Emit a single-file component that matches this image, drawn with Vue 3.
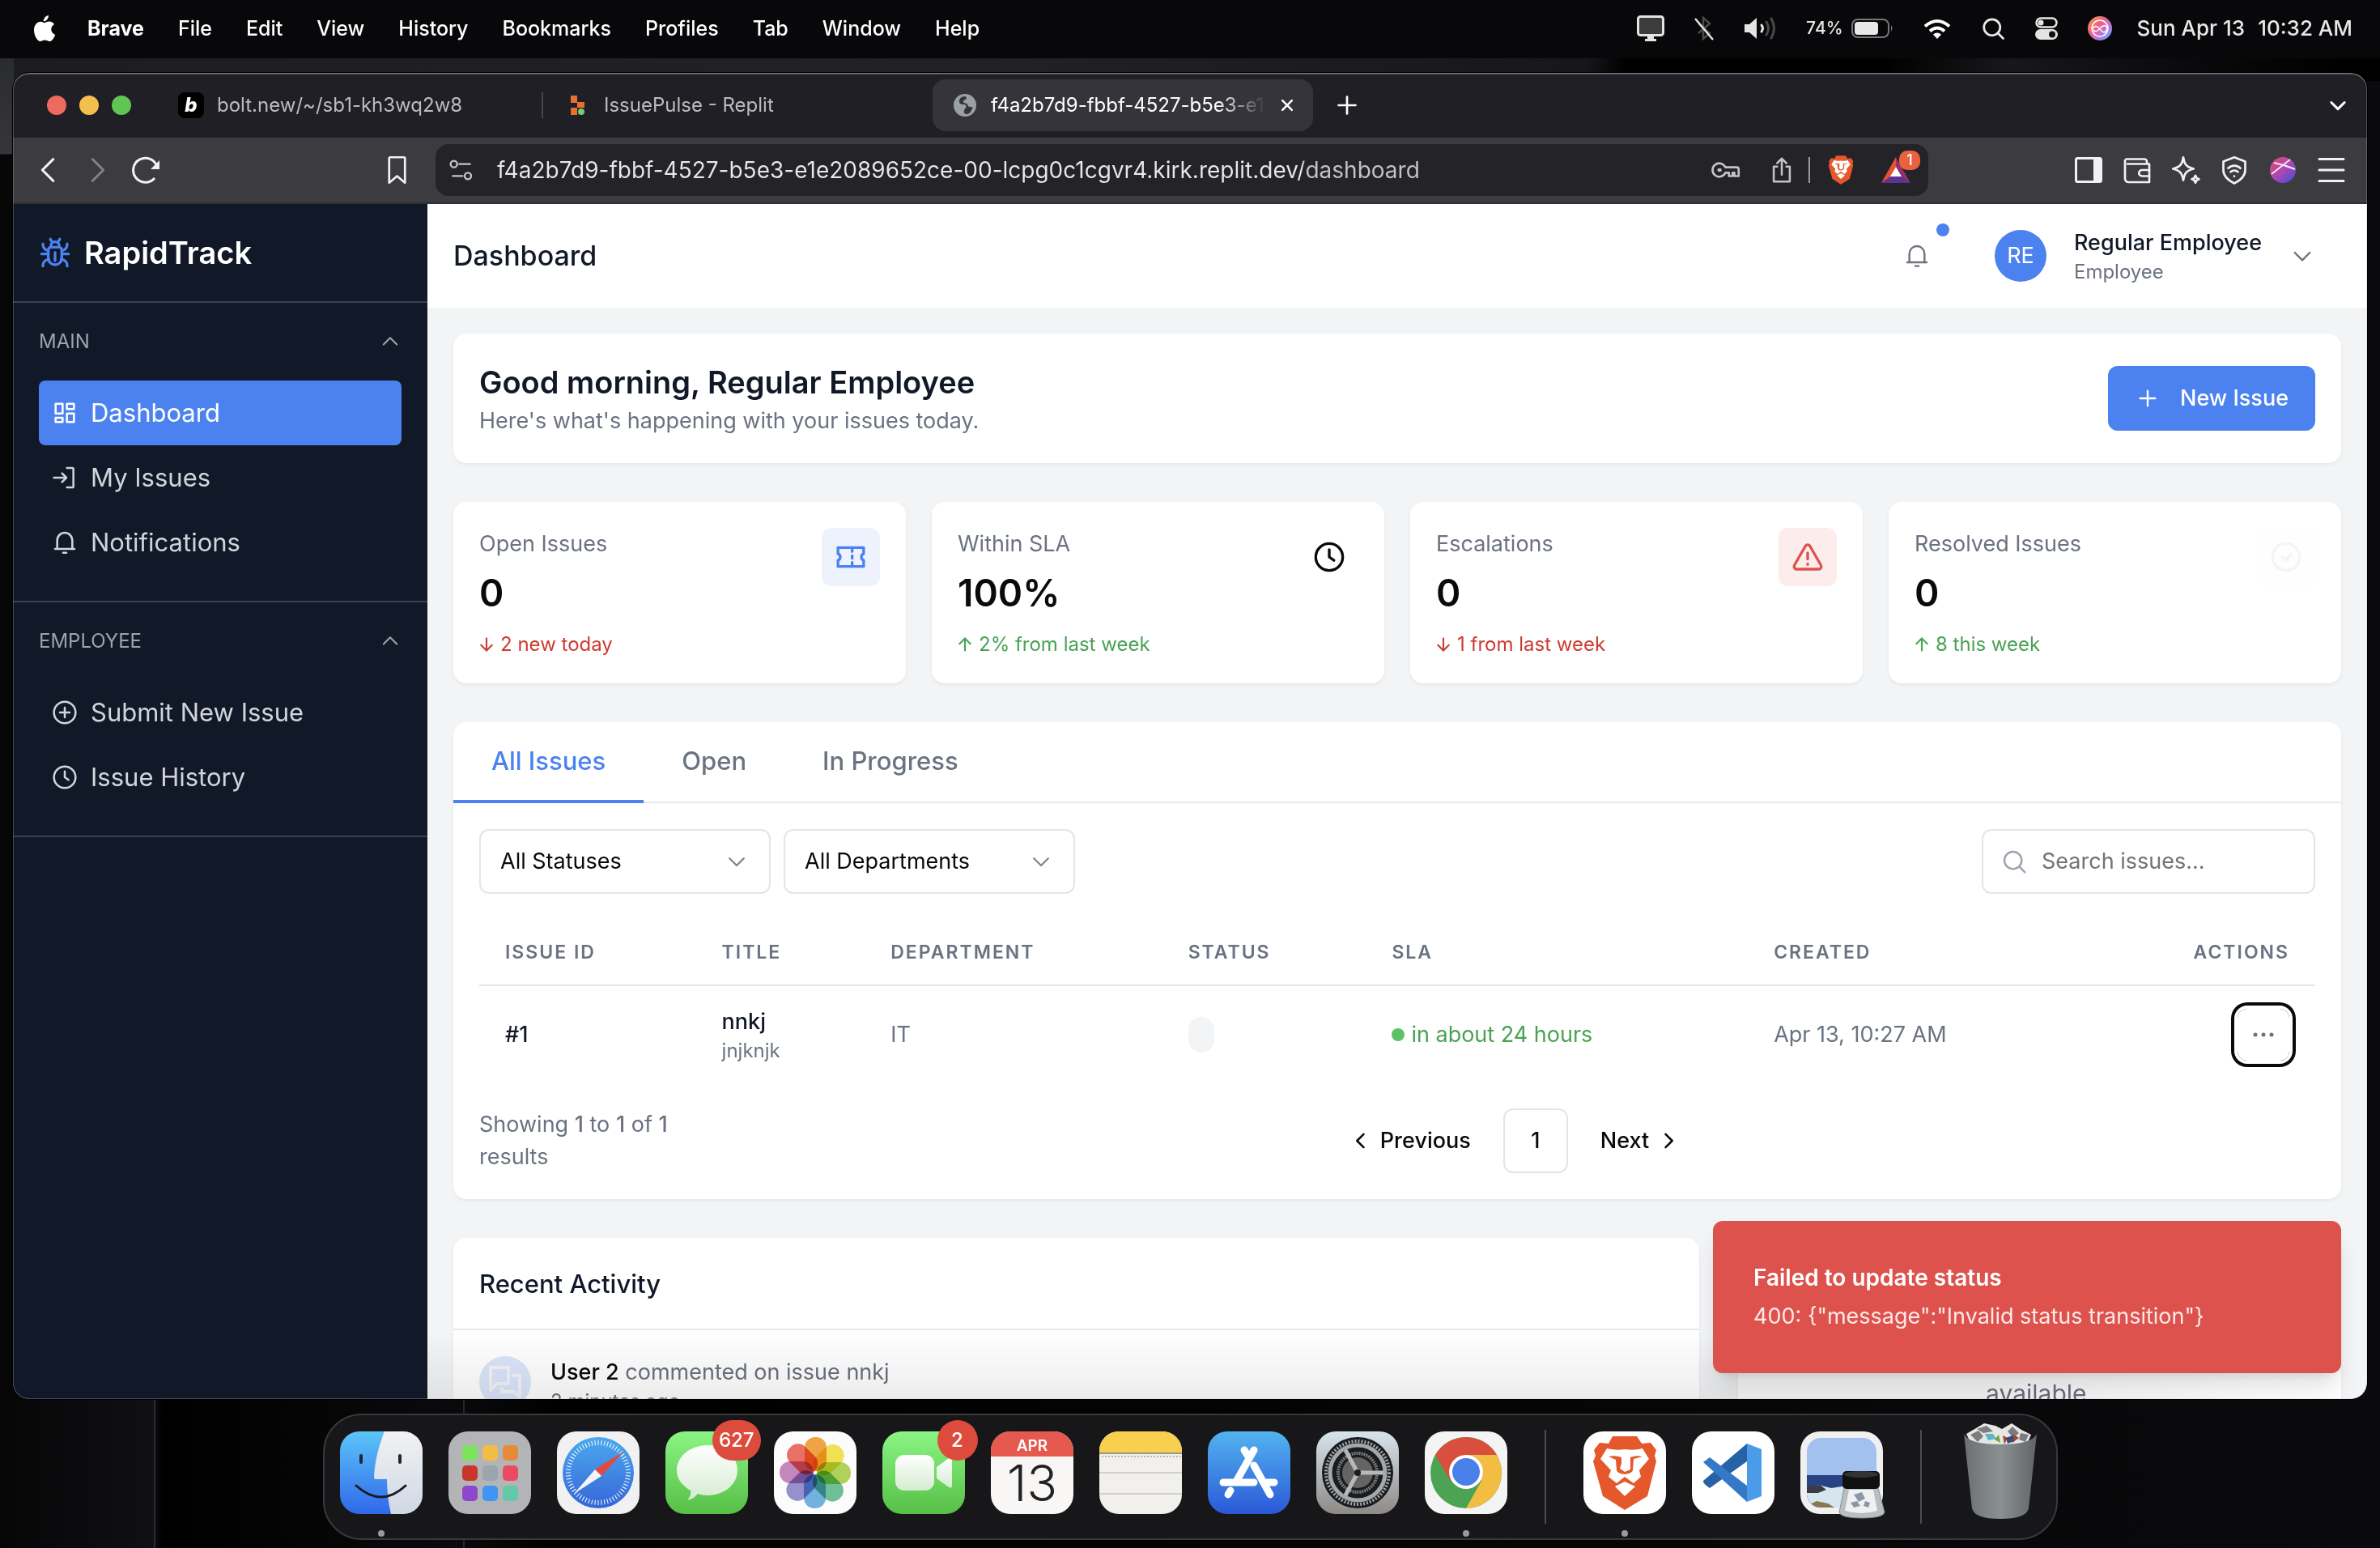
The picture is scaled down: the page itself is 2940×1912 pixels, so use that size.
<script setup>
import { h, ref } from 'vue'

const shapes = {
  bug: ['M7 10a2 2 0 0 1 2-2h6a2 2 0 0 1 2 2v6a5 5 0 0 1-10 0z', 'M12 12v6', 'M9 8V6.500a3 2.500 0 0 1 6 0V8', 'M8.500 2l1.500 2.500M15.500 2L14 4.500', 'M2 13h5M17 13h5', 'M3 5.500C3 8.500 4 10 7 10.500M21 5.500c0 3-1 4.500-4 5', 'M3 22c0-3 1-4.500 4.500-5M21 22c0-3-1-4.500-4.500-5'],
  board: ['M3.500 3.500h6.500v9H3.500z', 'M14 3.500h6.500v5H14z', 'M3.500 16.500h6.500v4H3.500z', 'M14 12.500h6.500v8H14z'],
  enter: ['M2 12h11', 'M9.500 8l4 4-4 4', 'M14 3h5a1 1 0 0 1 1 1v16a1 1 0 0 1-1 1h-5'],
  bell: ['M5 18v-8a7 7 0 0 1 14 0v8', 'M3 18h18', 'M10.500 21.500h3'],
  plusCircle: ['M12 2a10 10 0 1 0 0 20 10 10 0 0 0 0-20z', 'M12 7.500v9M7.500 12h9'],
  clock: ['M12 2a10 10 0 1 0 0 20 10 10 0 0 0 0-20z', 'M12 6.500V12l3.500 2.500'],
  up: ['M5 15l7-7 7 7'],
  down: ['M5 9l7 7 7-7'],
  left: ['M15 5l-7 7 7 7'],
  right: ['M9 5l7 7-7 7'],
  plus: ['M12 5v14M5 12h14'],
  ticket: ['M2.500 5h19v4.500a2.700 2.700 0 0 0 0 5V19h-19v-4.500a2.700 2.700 0 0 0 0-5z', 'M13 5v3M13 11v2M13 16v3'],
  warning: ['M10.300 3.900L2.200 18a2 2 0 0 0 1.700 3h16.200a2 2 0 0 0 1.700-3L13.700 3.900a2 2 0 0 0-3.400 0z', 'M12 9v4.500M12 17v.500'],
  check: ['M12 2a10 10 0 1 0 0 20 10 10 0 0 0 0-20z', 'M9 12l2.500 2.500L15.500 10'],
  trendDown: ['M12 2v20', 'M3 13l9 9 9-9'],
  trendUp: ['M12 22V2', 'M3 11l9-9 9 9'],
  search: ['M11 3a8 8 0 1 0 0 16 8 8 0 0 0 0-16z', 'M17 17l5 5'],
  chat: ['M3 3h11v10H7l-4 4z', 'M17 8h4v13l-4-3h-7v-2'],
  cross: ['M5 5l14 14M19 5L5 19'],
  menu: ['M2 3h20M2 12h20M2 21h20'],
  bookmark: ['M4.500 2.500a1 1 0 0 1 1-1h11a1 1 0 0 1 1 1v20L11 17l-6.500 5.500z'],
  share: ['M8 9H5v13h14V9h-3', 'M12 16V2M8 6l4-4 4 4'],
  tune: ['M2 6.500a3 3 0 1 0 6 0 3 3 0 0 0-6 0zM10 6.500h10', 'M15 17.500a3 3 0 1 0 6 0 3 3 0 0 0-6 0zM4 17.500h9'],
  key: ['M11.500 9.700H21a1.500 1.500 0 0 1 1.500 1.500V17H19v-2.700h-1.500V17h-3v-2.700h-3a5.500 5.500 0 1 1 0-4.600z', 'M6 11.500h1.500v1H6z'],
  wallet: ['M3 3h15a2 2 0 0 1 2 2v2M2 4v15a3 3 0 0 0 3 3h17V7H4', 'M22 12h-6a2.500 2.500 0 0 0 0 5h6'],
  spark: ['M10 1.500c1 6 2.500 8 8.500 9.500-6 1.500-7.500 3.500-8.500 9.500-1-6-2.500-8-8.500-9.500 6-1.500 7.500-3.500 8.500-9.500z', 'M20 16.500c.400 2 1 2.600 3 3-2 .400-2.600 1-3 3-.400-2-1-2.600-3-3 2-.400 2.600-1 3-3z'],
  vpn: ['M12 1.500l9 3.500v7c0 5-4 8.500-9 11-5-2.500-9-6-9-11V5z', 'M7 10.500a7 7 0 0 1 10 0M9 13.500a4.500 4.500 0 0 1 6 0M12 17v.200'],
}

const Glyph = (props) =>
  h('svg', {
    viewBox: '0 0 24 24', width: props.size, height: props.size, fill: 'none', stroke: 'currentColor',
    'stroke-width': props.weight ?? 2, 'stroke-linecap': 'round', 'stroke-linejoin': 'round', 'aria-hidden': 'true',
  }, shapes[props.name].map((d) => h('path', { d })))
Glyph.props = ['name', 'size', 'weight']

const menus = ['File', 'Edit', 'View', 'History', 'Bookmarks', 'Profiles', 'Tab', 'Window', 'Help']
const sections = [
  { title: 'MAIN', items: [
    { label: 'Dashboard', icon: 'board', active: true },
    { label: 'My Issues', icon: 'enter' },
    { label: 'Notifications', icon: 'bell' },
  ] },
  { title: 'EMPLOYEE', items: [
    { label: 'Submit New Issue', icon: 'plusCircle' },
    { label: 'Issue History', icon: 'clock' },
  ] },
]
const stats = [
  { label: 'Open Issues', value: '0', trend: '2 new today', dir: 'down', icon: 'ticket', tone: 'blue' },
  { label: 'Within SLA', value: '100%', trend: '2% from last week', dir: 'up', icon: 'clock', tone: 'plain' },
  { label: 'Escalations', value: '0', trend: '1 from last week', dir: 'down', icon: 'warning', tone: 'red' },
  { label: 'Resolved Issues', value: '0', trend: '8 this week', dir: 'up', icon: 'check', tone: 'faint' },
]
const tabs = ['All Issues', 'Open', 'In Progress']
const activeTab = ref('All Issues')
const address = ref('f4a2b7d9-fbbf-4527-b5e3-e1e2089652ce-00-lcpg0c1cgvr4.kirk.replit.dev/dashboard')
const search = ref('')

const tiles = ['#7be35b', '#f3bd45', '#e58a38', '#c9372b', '#9aa5ad', '#ea4b62', '#8f46cf', '#3f94f4', '#63c9a8']
const petals = ['#f19a2b', '#f2df3c', '#a8cf45', '#5cb98a', '#5fa9e0', '#8a83c9', '#bf79b4', '#ea5d50']
const ticks = Array.from({ length: 60 }, (_, i) => i * 6)
</script>

<template>
  <div class="desktop">
    <header class="menubar">
      <svg class="apple" viewBox="0 0 28 32" width="28" height="32" fill="#fff">
        <path d="M19 0c.300 3.500-3 7.500-6.200 7.300C12.400 4 15.800.400 19 0zM14 9.200c1.400 0 3-1.600 5.700-1.600 2.800 0 5 1.400 6.300 3.400-5.500 3.400-4.700 10.500 1.200 12.900C25.800 28 23 32 20.300 32c-2.300 0-3-1.400-5.800-1.400S10.800 32 8.700 32C5 32 1 24.500 1 18.200 1 11.500 5.200 7.800 9.300 7.800c2 0 3.600 1.400 4.700 1.400z" />
      </svg>
      <nav class="menus">
        <strong>Brave</strong>
        <span v-for="m in menus" :key="m">{{ m }}</span>
      </nav>
      <div class="status">
        <svg viewBox="0 0 34 32" width="34" height="32"><rect x="1.500" y="1.500" width="31" height="23" rx="3" fill="#3c3c3c" stroke="#e4e4e4" stroke-width="3" /><path d="M13 25h8v4h3v3H10v-3h3z" fill="#e4e4e4" /></svg>
        <svg viewBox="0 0 24 30" width="24" height="30" fill="none" stroke-width="2.500"><path d="M5 9l14 12-8 7V2l8 7L5 21" stroke="#4a4a4a" /><path d="M1 3l22 26" stroke="#e4e4e4" /></svg>
        <svg viewBox="0 0 40 30" width="40" height="30" fill="none" stroke-width="3" stroke-linecap="round"><path d="M1 10h6l9-8v26l-9-8H1z" fill="#e4e4e4" /><path d="M22 11q3 4 0 8" stroke="#e4e4e4" /><path d="M28 7q5 8 0 16M34 3q7 12 0 24" stroke="#4a4a4a" /></svg>
        <span class="battery">
          74%
          <svg viewBox="0 0 52 24" width="52" height="24"><rect x="1" y="1" width="45" height="22" rx="7" fill="none" stroke="#777" stroke-width="2" /><rect x="4" y="4" width="29" height="16" rx="4" fill="#e8e8e8" /><path d="M49 8q3 4 0 8z" fill="#777" /></svg>
        </span>
        <svg viewBox="0 0 34 25" width="34" height="25" fill="none" stroke="#fff" stroke-width="4"><path d="M2 9.500q15-13 30 0M8 15.500q9-8 18 0" /><path d="M12 19.500q5-4 10 0l-5 5.500z" fill="#fff" stroke="none" /></svg>
        <Glyph name="search" :size="30" :weight="2.2" />
        <svg viewBox="0 0 28 28" width="28" height="28"><rect x="1.500" y="1.500" width="25" height="11" rx="5.500" fill="none" stroke="#e4e4e4" stroke-width="2.500" /><circle cx="7" cy="7" r="3.500" fill="#e4e4e4" /><rect x="0" y="15" width="28" height="13" rx="6.500" fill="#e4e4e4" /><circle cx="21" cy="21.500" r="4" fill="#111" /></svg>
        <svg viewBox="0 0 30 30" width="30" height="30">
          <defs><linearGradient id="siri" x1="0" y1="0" x2="1" y2="1"><stop offset="0" stop-color="#f6a63a" /><stop offset=".4" stop-color="#ef5f86" /><stop offset=".7" stop-color="#b07be8" /><stop offset="1" stop-color="#3cc4f2" /></linearGradient></defs>
          <circle cx="15" cy="15" r="15" fill="url(#siri)" /><circle cx="15" cy="15" r="10" fill="none" stroke="#fff" stroke-width="1.500" /><path d="M6 16q3-6 7-2l5 5q3 2 5-1 2-4-1-6-3-1-6 2l-4 4q-3 2-5-1" fill="none" stroke="#fff" stroke-width="1.500" />
        </svg>
        <time class="clock"><span>Sun Apr 13</span><span>10:32 AM</span></time>
      </div>
    </header>

    <section class="window">
      <div class="strip">
        <div class="lights"><i class="red"></i><i class="amber"></i><i class="green"></i></div>
        <div class="btabs">
          <button class="btab"><span class="fav bolt">b</span><span class="btitle">bolt.new/~/sb1-kh3wq2w8</span></button>
          <i class="rule"></i>
          <button class="btab">
            <span class="fav"><svg viewBox="0 0 20 26" width="20" height="26"><path d="M1 1h8v9H1zM9 9h9v7H9zM1 16h8v9H1z" fill="#e8702f" /><circle cx="14" cy="21" r="4" fill="#6fcf74" /></svg></span>
            <span class="btitle">IssuePulse - Replit</span>
          </button>
          <i class="rule off"></i>
          <button class="btab on">
            <span class="fav"><svg viewBox="0 0 28 28" width="28" height="28"><circle cx="14" cy="14" r="14" fill="#9ba0a5" /><path d="M15 3C9 3 7 6 7 9s2 4 5 4 4 2 3 4-3 3-2 6 4 2 6 1 3-4 4-6 0-2-3-2-2-3-4-4-5-1-4-3 3-2 4-3z" fill="#35343a" /></svg></span>
            <span class="btitle">f4a2b7d9-fbbf-4527-b5e3-e1e2089652ce</span>
            <Glyph name="cross" :size="20" :weight="3" />
          </button>
        </div>
        <button class="ibtn" aria-label="New tab"><Glyph name="plus" :size="36" :weight="1.8" /></button>
        <button class="ibtn last" aria-label="Tab list"><Glyph name="down" :size="28" :weight="2.6" /></button>
      </div>

      <div class="toolbar">
        <button class="ibtn" aria-label="Back"><Glyph name="left" :size="46" :weight="1.6" /></button>
        <button class="ibtn dim" aria-label="Forward"><Glyph name="right" :size="46" :weight="1.6" /></button>
        <button class="ibtn" aria-label="Reload"><svg viewBox="0 0 36 36" width="36" height="36" fill="none" stroke="currentColor" stroke-width="3"><path d="M29 28a15 15 0 1 1 3-14" /><path d="M35 6v11H24z" fill="currentColor" stroke="none" /></svg></button>
        <button class="ibtn save" aria-label="Bookmark"><Glyph name="bookmark" :size="36" :weight="1.8" /></button>
        <div class="urlbar">
          <Glyph name="tune" :size="32" :weight="1.8" />
          <input v-model="address" class="url" aria-label="Address" spellcheck="false" />
          <Glyph name="key" :size="36" :weight="1.8" />
          <Glyph class="shareicon" name="share" :size="34" :weight="1.8" />
          <i class="bar"></i>
          <svg viewBox="10 4 82 95" width="32" height="38"><use href="#lion" /></svg>
          <span class="bat">
            <svg viewBox="0 0 36 32" width="36" height="32"><path d="M18 0L0 32l11-7 7-13z" fill="#ea5133" /><path d="M18 0l18 32-11-7-7-13z" fill="#93306e" /><path d="M0 32h36l-11-8H11z" fill="#5d3291" /><path d="M18 12l7 12H11z" fill="#fff" /></svg>
            <b>1</b>
          </span>
        </div>
        <div class="tools">
          <button class="ibtn" aria-label="Sidebar"><svg viewBox="0 0 36 36" width="36" height="36"><rect x="2.500" y="3.500" width="31" height="29" rx="2" fill="none" stroke="currentColor" stroke-width="3" /><path d="M24 3h9v30h-9z" fill="currentColor" /></svg></button>
          <button class="ibtn" aria-label="Wallet"><Glyph name="wallet" :size="36" :weight="1.8" /></button>
          <button class="ibtn" aria-label="Assistant"><Glyph name="spark" :size="36" :weight="1.8" /></button>
          <button class="ibtn" aria-label="VPN"><Glyph name="vpn" :size="36" :weight="1.8" /></button>
          <button class="ibtn" aria-label="Profile">
            <svg viewBox="0 0 32 32" width="32" height="32"><defs><linearGradient id="orb" x1="0" y1="0" x2="1" y2="1"><stop offset="0" stop-color="#e24a6a" /><stop offset=".5" stop-color="#b046b4" /><stop offset="1" stop-color="#3550d8" /></linearGradient></defs><circle cx="16" cy="16" r="16" fill="url(#orb)" /><path d="M2 21L25 3M5 7q14 3 26 8" fill="none" stroke="#f6e6f4" stroke-width="2" /></svg>
          </button>
          <button class="ibtn" aria-label="Menu"><Glyph name="menu" :size="36" :weight="2" /></button>
        </div>
      </div>

      <div class="app">
        <aside class="sidebar">
          <div class="brand"><Glyph name="bug" :size="40" :weight="2" />RapidTrack</div>
          <section v-for="s in sections" :key="s.title" class="group">
            <button class="ghead">{{ s.title }}<Glyph name="up" :size="28" :weight="1.8" /></button>
            <nav>
              <a v-for="i in s.items" :key="i.label" href="#" class="item" :class="{ active: i.active }"><Glyph :name="i.icon" :size="32" :weight="1.9" />{{ i.label }}</a>
            </nav>
          </section>
        </aside>

        <main class="main">
          <header class="top">
            <h1>Dashboard</h1>
            <button class="alerts" aria-label="Notifications"><Glyph name="bell" :size="32" :weight="1.8" /><i></i></button>
            <button class="user">
              <span class="avatar">RE</span>
              <span class="who"><span>Regular Employee</span><small>Employee</small></span>
              <Glyph name="down" :size="32" :weight="1.8" />
            </button>
          </header>

          <div class="content">
            <section class="card hello">
              <div><h2>Good morning, Regular Employee</h2><p>Here's what's happening with your issues today.</p></div>
              <button class="primary"><Glyph name="plus" :size="32" :weight="1.8" />New Issue</button>
            </section>

            <section class="stats">
              <article v-for="s in stats" :key="s.label" class="card stat">
                <div>
                  <p class="slabel">{{ s.label }}</p>
                  <p class="svalue">{{ s.value }}</p>
                  <p class="trend" :class="s.dir"><Glyph :name="s.dir === 'up' ? 'trendUp' : 'trendDown'" :size="18" :weight="2.8" />{{ s.trend }}</p>
                </div>
                <span class="sicon" :class="s.tone"><Glyph :name="s.icon" :size="40" :weight="2" /></span>
              </article>
            </section>

            <section class="card">
              <div class="tabs" role="tablist">
                <button v-for="t in tabs" :key="t" role="tab" :aria-selected="t === activeTab" :class="{ on: t === activeTab }" @click="activeTab = t">{{ t }}</button>
              </div>
              <div class="panel">
                <div class="filters">
                  <label class="field"><select aria-label="Status"><option>All Statuses</option></select><Glyph name="down" :size="30" :weight="1.9" /></label>
                  <label class="field"><select aria-label="Department"><option>All Departments</option></select><Glyph name="down" :size="30" :weight="1.9" /></label>
                  <label class="find"><Glyph name="search" :size="32" :weight="1.8" /><input v-model="search" type="text" placeholder="Search issues..." aria-label="Search issues" /></label>
                </div>

                <table>
                  <colgroup><col class="c1" /><col class="c2" /><col class="c3" /><col class="c4" /><col class="c5" /><col class="c6" /><col /></colgroup>
                  <thead><tr><th>ISSUE ID</th><th>TITLE</th><th>DEPARTMENT</th><th>STATUS</th><th>SLA</th><th>CREATED</th><th class="end">ACTIONS</th></tr></thead>
                  <tbody>
                    <tr>
                      <td class="strong">#1</td>
                      <td><div class="strong title">nnkj</div><div class="desc">jnjknjk</div></td>
                      <td>IT</td>
                      <td><span class="pill"></span></td>
                      <td><span class="sla"><i></i>in about 24 hours</span></td>
                      <td>Apr 13, 10:27 AM</td>
                      <td class="end"><button class="more" aria-label="Row actions"><svg viewBox="0 0 26 6" width="26" height="6" fill="#6b7280"><circle cx="3" cy="3" r="2.500" /><circle cx="13" cy="3" r="2.500" /><circle cx="23" cy="3" r="2.500" /></svg></button></td>
                    </tr>
                  </tbody>
                </table>

                <footer class="pager">
                  <p>Showing <b>1</b> to <b>1</b> of <b>1</b> results</p>
                  <nav>
                    <button class="step"><Glyph name="left" :size="28" :weight="2.2" />Previous</button>
                    <button class="num">1</button>
                    <button class="step next">Next<Glyph name="right" :size="28" :weight="2.2" /></button>
                  </nav>
                </footer>
              </div>
            </section>

            <div class="lower">
              <section class="card recent">
                <h3>Recent Activity</h3>
                <div class="event">
                  <span class="bubble"><Glyph name="chat" :size="48" :weight="2" /></span>
                  <div><p><b>User 2</b> commented on issue nnkj</p><small>2 minutes ago</small></div>
                </div>
              </section>
              <section class="card side">available</section>
            </div>
          </div>
        </main>
      </div>

      <div class="shade"></div>
      <div class="toast" role="alert"><strong>Failed to update status</strong><span>400: {"message":"Invalid status transition"}</span></div>
    </section>

    <footer class="dock">
      <div class="slot run">
        <svg viewBox="0 0 102 102"><defs>
          <linearGradient id="fin" x1="0" y1="0" x2="0" y2="1"><stop offset="0" stop-color="#5cc5f8" /><stop offset="1" stop-color="#3068ea" /></linearGradient>
          <linearGradient id="finr" x1="0" y1="0" x2="0" y2="1"><stop offset="0" stop-color="#f2f2f4" /><stop offset="1" stop-color="#d0d8e4" /></linearGradient>
          <linearGradient id="grn" x1="0" y1="0" x2="0" y2="1"><stop offset="0" stop-color="#8af584" /><stop offset="1" stop-color="#57bf46" /></linearGradient>
          <linearGradient id="wht" x1="0" y1="0" x2="0" y2="1"><stop offset="0" stop-color="#fff" /><stop offset="1" stop-color="#d4ecd0" /></linearGradient>
          <clipPath id="sq"><rect width="102" height="102" rx="24" /></clipPath>
          <g id="lion">
            <path d="M36 6h30l6 9 11-1 7 9-2 7 2 7-11 43-28 17-27-17L12 37l3-7-2-7 7-9 11 1z" fill="#e4582c" />
            <path d="M29 21q12 3 22 1 12 2 22-1l8 13-12 14 2 8-9 8-11-8-10 8-10-8 3-8-13-14z" fill="#fff" />
            <path d="M31 31q8-2 16 1v15l4 3 7-3V32q7-3 15-1l-11 3-1 14q-1 4-10 5-9-1-10-5l-1-13z" fill="#e4582c" />
            <path d="M49 33h5l3 13-6 3-6-3z" fill="#fff" />
            <path d="M51 62l13 6-13 12-12-12z" fill="#fff" />
          </g></defs>
          <g clip-path="url(#sq)"><rect width="102" height="102" fill="url(#fin)" /><path d="M55 0C47 20 43 38 42 57q0 2 2 2h14q0 22 5 43h40V0z" fill="url(#finr)" /></g>
          <path d="M26 30v8M74 30v8" stroke="#1d2733" stroke-width="4" stroke-linecap="round" /><path d="M20 67q31 28 61 0" fill="none" stroke="#171c24" stroke-width="3" stroke-linecap="round" />
        </svg>
      </div>
      <div class="slot">
        <svg viewBox="0 0 102 102"><rect width="102" height="102" rx="24" fill="#b3b4b5" /><rect v-for="(c, i) in tiles" :key="i" :x="17 + (i % 3) * 25" :y="17 + Math.floor(i / 3) * 25" width="19" height="19" rx="5" :fill="c" /></svg>
      </div>
      <div class="slot">
        <svg viewBox="0 0 102 102"><defs><linearGradient id="saf" x1="0" y1="0" x2="0" y2="1"><stop offset="0" stop-color="#4ba9ee" /><stop offset="1" stop-color="#3666d8" /></linearGradient></defs>
          <rect width="102" height="102" rx="24" fill="#f1f1f1" /><circle cx="51" cy="51" r="44" fill="url(#saf)" />
          <path v-for="t in ticks" :key="t" d="M51 11v6" stroke="#fff" stroke-width="1" :transform="`rotate(${t} 51 51)`" />
          <path d="M82 25L47 47l8 8z" fill="#e4493c" /><path d="M21 77l26-30 8 8z" fill="#f4f4f4" />
        </svg>
      </div>
      <div class="slot">
        <svg viewBox="0 0 102 102"><rect width="102" height="102" rx="24" fill="url(#grn)" /><path d="M52 17c21 0 37 14 37 31S73 79 52 79c-5 0-9-1-12-2-3 4-8 7-13 8 3-3 5-8 4-12-10-6-17-14-17-25 0-17 17-31 38-31z" fill="url(#wht)" /></svg>
        <span class="badge">627</span>
      </div>
      <div class="slot">
        <svg viewBox="0 0 102 102"><rect width="102" height="102" rx="24" fill="#fcfcfc" /><rect v-for="(c, i) in petals" :key="i" class="petal" x="38" y="7" width="27" height="42" rx="13" :fill="c" :transform="`rotate(${i * 45} 51 51)`" /></svg>
      </div>
      <div class="slot">
        <svg viewBox="0 0 102 102"><rect width="102" height="102" rx="24" fill="url(#grn)" /><rect x="16" y="29" width="48" height="44" rx="11" fill="url(#wht)" /><path d="M67 44l15-11q4-2 4 2v32q0 4-4 2L67 58z" fill="url(#wht)" /></svg>
        <span class="badge">2</span>
      </div>
      <div class="slot">
        <svg viewBox="0 0 102 102"><g clip-path="url(#sq)"><rect width="102" height="102" fill="#f8f7f6" /><rect width="102" height="31" fill="#e5594f" /></g><text x="51" y="24" text-anchor="middle" font-size="19" font-weight="600" fill="#fff">APR</text><text x="51" y="86" text-anchor="middle" font-size="62" font-weight="300" fill="#222">13</text></svg>
      </div>
      <div class="slot">
        <svg viewBox="0 0 102 102"><g clip-path="url(#sq)"><rect width="102" height="102" fill="#f1f0ed" /><rect width="102" height="26" fill="#f8cf4e" /><path d="M0 27h102" stroke="#9a9689" stroke-width="2" /><path d="M3 31h98" stroke="#b8b6b0" stroke-width="2" stroke-dasharray="2 2" /><path d="M0 51h102M0 77h102" stroke="#cfcfd0" stroke-width="2" /></g></svg>
      </div>
      <div class="slot">
        <svg viewBox="0 0 102 102"><defs><linearGradient id="aps" x1="0" y1="0" x2="0" y2="1"><stop offset="0" stop-color="#52b4ef" /><stop offset="1" stop-color="#2b58d8" /></linearGradient></defs><rect width="102" height="102" rx="24" fill="url(#aps)" /><g stroke="#fff" stroke-width="9" stroke-linecap="round"><path d="M57 23L35 62M45 23l5 8M57 42l20 36M19 63h38M72 63h10M28 73l-3 5" /></g></svg>
      </div>
      <div class="slot">
        <svg viewBox="0 0 102 102"><defs><linearGradient id="set" x1="0" y1="0" x2="0" y2="1"><stop offset="0" stop-color="#d8e4ec" /><stop offset="1" stop-color="#8e8a86" /></linearGradient></defs><rect width="102" height="102" rx="24" fill="url(#set)" /><circle cx="51" cy="51" r="44" fill="#1b1c1e" /><g fill="none" stroke="#a3a8ab"><circle cx="51" cy="51" r="39" stroke-width="4" stroke-dasharray="2 2" /><circle cx="51" cy="51" r="34" stroke-width="5" /><circle cx="51" cy="51" r="24" stroke-width="4" stroke-dasharray="2 1" stroke="#77797a" /></g><circle cx="51" cy="51" r="19" fill="#656463" /><path d="M51 51h32M51 51L36 23M51 51L36 79" stroke="#b4b9bc" stroke-width="5" /><circle cx="51" cy="51" r="4" fill="#1b1c1e" /></svg>
      </div>
      <div class="slot run">
        <svg viewBox="0 0 102 102"><rect width="102" height="102" rx="24" fill="#f4f4f4" /><circle cx="51" cy="51" r="44" fill="#4ca353" /><path d="M51 29h38a44 44 0 0 1-38 66l19-34z" fill="#f2bd42" /><path d="M51 29h38A44 44 0 0 0 13 29l19 33 19-11z" fill="#d94f3d" /><circle cx="51" cy="50" r="21" fill="#fff" /><circle cx="51" cy="50" r="17" fill="#4a80ea" /></svg>
      </div>
      <i class="sep"></i>
      <div class="slot run"><svg viewBox="0 0 102 102"><rect width="102" height="102" rx="24" fill="#fff" /><use href="#lion" /></svg></div>
      <div class="slot">
        <svg viewBox="0 0 102 102"><rect width="102" height="102" rx="24" fill="#fff" /><path d="M68 15L14 61q-1 3 8 9l46-33z" fill="#2762a6" /><path d="M22 32l-8 6 54 49V67z" fill="#3478c8" /><path d="M68 15l18 7v58l-18 7z" fill="#4a9be8" /></svg>
      </div>
      <div class="slot">
        <svg viewBox="0 0 102 102"><rect width="102" height="102" rx="24" fill="#f0f0f0" /><clipPath id="ph"><rect x="8" y="8" width="86" height="86" rx="17" /></clipPath><g clip-path="url(#ph)"><rect width="102" height="102" fill="#a3c1ee" /><rect y="54" width="102" height="48" fill="#2a4384" /><path d="M8 72l14-6 16 4 20-3v35H8z" fill="#d5e6ee" /><path d="M8 68l16-2 8 6-10 4H8z" fill="#3c3a42" /><path d="M8 92l12-6 14 3 10 6v7H8z" fill="#8d7653" /></g><path d="M54 70h42l8 30q-2 7-28 7t-28-7z" fill="#b9bec1" stroke="#8a8f92" stroke-width="1" /><path d="M60 72h30l5 26q-20 6-40 0z" fill="#eef0f1" /><path d="M66 78l10-3 4 8-8 4zM62 88l8-2 4 6-8 2zM80 86l6 2-2 6-6-2z" fill="#8d97a8" /><rect x="52" y="49" width="46" height="22" rx="5" fill="#111" /><ellipse cx="75" cy="53" rx="21" ry="4" fill="#333" /></svg>
      </div>
      <i class="sep"></i>
      <div class="slot">
        <svg viewBox="0 0 102 102"><defs><linearGradient id="can" x1="0" y1="0" x2="1" y2="0"><stop offset="0" stop-color="#6b6f72" /><stop offset=".5" stop-color="#8b9093" /><stop offset="1" stop-color="#606467" /></linearGradient></defs><path d="M9 3l12-7 10-6 14 3 8 4 12-7 12 8 12 6-6 14H16z" fill="#e6e6e4" /><path d="M14 4l10-5 6 7-7 7zM22-3l12-4 8 7-12 2zM60 0l6-6 8 8-7 6zM76 2l10 2-4 9-8-3z" fill="#7b7d80" /><path d="M32 3h10l4 6-10 2z" fill="#58b8c8" /><path d="M44 10l5-6 2 10z" fill="#6da244" /><path d="M54 5l6 3-4 8zM66 3l8 5-8 6z" fill="#a34630" /><path d="M58 8l8-3 2 7-8 3z" fill="#324a80" /><path d="M6 3q6 13 45 13T96 3l-10 92q-3 13-35 13T16 95z" fill="url(#can)" /></svg>
      </div>
    </footer>
  </div>
</template>

<style>
body { background: #000; }
</style>

<style scoped>
* { box-sizing: border-box; }
p, h1, h2, h3 { margin: 0; font-weight: 400; }
button, input, select { font: inherit; color: inherit; background: none; border: 0; margin: 0; padding: 0; }
svg { display: block; flex: none; }

.desktop {
  display: flex; flex-direction: column; height: 100vh; overflow: hidden;
  font: 400 27px/40px Inter, "Noto Sans", sans-serif; color: #0a0a0a;
  background:
    linear-gradient(#242529, #35363a 190px, transparent 191px) 0 0 / 17px 100% no-repeat,
    linear-gradient(90deg, #1d1d21 0, #212126 1200px, #17171b 1960px, #000 2010px, #000 2330px, #18181b 2480px, #0a0a0c 2700px, #000 2900px) 0 0 / 100% 100px no-repeat,
    linear-gradient(90deg, transparent 190px, #2b2b30 190px, #2b2b30 192px, transparent 192px, transparent 572px, #26262b 572px, #26262b 574px, transparent 574px) 0 100% / 100% 184px no-repeat,
    linear-gradient(90deg, #060607, #101013 190px, #000 200px, #0a0a0c 560px, #000 700px, #0a0a0c);
}

.menubar { display: flex; align-items: center; height: 72px; flex: none; padding: 0 34px 2px 41px; background: #08080a; color: #fff; font-size: 25px; font-weight: 500; }
.apple { margin-right: 39px; }
.menus { display: flex; gap: 42px; flex: 1; }
.menus strong { font-weight: 700; }
.status { display: flex; align-items: center; gap: 37px; color: #e8e8e8; }
.battery { display: flex; align-items: center; gap: 10px; font-size: 21px; }
.clock { display: flex; gap: 16px; margin-left: -6px; font-size: 26px; }

.window { position: relative; display: flex; flex-direction: column; flex: 1; min-height: 0; margin: 18px 16px; border-radius: 20px; overflow: hidden; outline: 1px solid #000; }
.window::after { content: ""; position: absolute; inset: 0; border-radius: 20px; box-shadow: inset 0 0 0 1px rgba(200, 200, 210, .28), inset 0 2px 0 rgba(200, 200, 210, .3); pointer-events: none; }

.strip { display: flex; align-items: center; flex: none; height: 80px; padding: 0 18px 0 42px; background: #201f25; color: #fff; }
.lights { display: flex; gap: 16px; margin-right: 34px; }
.lights i { width: 24px; height: 24px; border-radius: 50%; }
.red { background: #ec6a5e; } .amber { background: #f4bf4f; } .green { background: #61c554; }
.btabs { display: flex; align-items: center; }
.btab { display: flex; align-items: center; gap: 16px; width: 470px; height: 64px; padding: 0 22px 0 24px; border-radius: 16px; font-size: 24px; color: #bcbcbf; text-align: left; }
.btab.on { background: #35343a; color: #fff; }
.btab.on .btitle { flex: 1; -webkit-mask-image: linear-gradient(90deg, #000 82%, transparent); mask-image: linear-gradient(90deg, #000 82%, transparent); }
.btitle { overflow: hidden; white-space: nowrap; }
.fav { display: flex; align-items: center; justify-content: center; flex: none; width: 32px; height: 32px; }
.bolt { border-radius: 8px; background: #000; color: #fff; font-weight: 800; font-style: italic; }
.rule { width: 2px; height: 32px; margin: 0 3px; background: #46454b; }
.rule.off { background: none; }
.ibtn { display: flex; align-items: center; justify-content: center; flex: none; width: 36px; height: 36px; }
.strip .ibtn { margin-left: 24px; }
.strip .last { margin-left: auto; }
.dim { color: #7f7f84; }

.toolbar { display: flex; align-items: center; flex: none; gap: 24px; height: 82px; padding: 0 26px; background: #3c3b40; border-bottom: 2px solid #302f35; color: #f1f1f3; }
.save { margin-left: 252px; }
.urlbar { display: flex; align-items: center; flex: 1; height: 64px; margin-left: 4px; margin-right: 156px; padding: 0 20px 0 16px; border-radius: 16px; background: #242328; color: #c4c4c8; }
.url { flex: 1; min-width: 0; margin-left: 28px; height: 40px; outline: 0; font-size: 28px; background: linear-gradient(90deg, #e8e8ea 995px, #c4c4c8 995px); -webkit-background-clip: text; background-clip: text; -webkit-text-fill-color: transparent; }
.shareicon { margin: 0 16px 0 34px; }
.bar { width: 2px; height: 32px; margin-right: 22px; background: #9d9da1; }
.bat { position: relative; margin-left: 34px; margin-right: 2px; }
.bat b { position: absolute; top: -8px; right: -12px; width: 26px; height: 24px; border-radius: 10px; background: #e9613f; color: #fff; font-size: 18px; font-weight: 500; line-height: 24px; text-align: center; }
.tools { display: flex; gap: 24px; }

.app { display: flex; flex: 1; min-height: 0; background: #f3f4f6; }
.sidebar { flex: none; width: 512px; background: #111827; color: #d1d5db; }
.brand { display: flex; align-items: center; gap: 16px; height: 122px; padding: 0 32px; border-bottom: 2px solid #374151; color: #fff; font-size: 38px; font-weight: 600; }
.brand svg { color: #4b82f0; }
.group { padding: 32px; border-bottom: 2px solid #374151; }
.ghead { display: flex; align-items: center; justify-content: space-between; width: 100%; height: 32px; margin-bottom: 32px; color: #9ca3af; font-size: 24px; }
.item { display: flex; align-items: center; gap: 16px; height: 80px; padding: 0 16px; border-radius: 8px; color: inherit; font-size: 31px; text-decoration: none; }
.item.active { background: #4b82f0; color: #fff; }

.main { flex: 1; min-width: 0; overflow: hidden; }
.top { display: flex; align-items: center; height: 128px; padding: 0 64px 0 32px; background: #fff; }
.top h1 { flex: 1; font-size: 34px; font-weight: 500; color: #111827; }
.alerts { position: relative; display: flex; align-items: center; justify-content: center; width: 80px; height: 80px; margin-right: 56px; color: #6b7280; }
.alerts i { position: absolute; top: 0; right: 0; width: 16px; height: 16px; border-radius: 50%; background: #4b82f0; }
.user { display: flex; align-items: center; gap: 34px; color: #6b7280; text-align: left; }
.avatar { width: 64px; height: 64px; border-radius: 50%; background: #4b82f0; color: #fff; font-size: 27px; line-height: 64px; text-align: center; }
.who { display: flex; flex-direction: column; color: #111827; font-weight: 500; }
.who small { color: #6b7280; font-size: 24px; font-weight: 400; line-height: 32px; }

.content { display: flex; flex-direction: column; gap: 48px; padding: 32px; }
.card { border-radius: 16px; background: #fff; box-shadow: 0 2px 4px rgba(0, 0, 0, .06); }
.hello { display: flex; align-items: center; justify-content: space-between; padding: 32px; }
.hello h2 { font-size: 38px; font-weight: 600; line-height: 56px; color: #111827; }
.hello p { color: #6b7280; }
.primary { display: flex; align-items: center; gap: 24px; height: 80px; padding: 0 33px; border-radius: 12px; background: #4b82f0; color: #fff; font-weight: 500; }
.stats { display: grid; grid-template-columns: repeat(4, 1fr); gap: 32px; }
.stat { display: flex; align-items: flex-start; justify-content: space-between; padding: 32px; }
.slabel { color: #6b7280; }
.svalue { margin: 8px 0 16px; font-size: 46px; font-weight: 600; line-height: 64px; }
.trend { display: flex; align-items: center; gap: 8px; font-size: 24px; line-height: 32px; }
.trend.up { color: #49a253; } .trend.down { color: #cc3b31; }
.sicon { display: flex; align-items: center; justify-content: center; width: 72px; height: 72px; border-radius: 12px; }
.sicon.blue { background: #edf2fd; color: #4b82f0; }
.sicon.red { background: #fcedec; color: #dd524c; }
.sicon.faint { background: #fefefe; color: #f4f4f5; }

.tabs { display: flex; height: 100px; box-shadow: inset 0 -2px 0 #e5e7eb; }
.tabs button { padding: 0 47px; border-bottom: 4px solid transparent; color: #6b7280; font-size: 31px; font-weight: 500; }
.tabs .on { border-color: #4b82f0; color: #4b82f0; }
.panel { padding: 32px; }
.filters { display: flex; gap: 16px; margin-bottom: 32px; }
.field { position: relative; width: 360px; }
.field select { appearance: none; width: 100%; height: 80px; padding: 0 24px; border: 2px solid #e5e5e5; border-radius: 12px; }
.field svg { position: absolute; top: 25px; right: 27px; color: #858585; pointer-events: none; }
.find { display: flex; align-items: center; gap: 18px; width: 412px; height: 80px; margin-left: auto; padding: 0 22px; border: 2px solid #e5e5e5; border-radius: 12px; color: #9ca3af; }
.find input { flex: 1; min-width: 0; height: 40px; color: #0a0a0a; }
.find input::placeholder { color: #737373; opacity: 1; }

table { width: 100%; border-collapse: collapse; table-layout: fixed; }
.c1 { width: 11.8%; } .c2 { width: 9.2%; } .c3 { width: 16.2%; } .c4 { width: 11.1%; } .c5 { width: 20.8%; } .c6 { width: 20%; }
th { height: 81px; padding: 0 32px; border-bottom: 2px solid #e5e5e5; color: #6b7280; font-size: 23px; font-weight: 600; letter-spacing: 2px; text-align: left; white-space: nowrap; }
td { height: 120px; padding: 0 32px; color: #6b7280; white-space: nowrap; }
.end { text-align: right; }
.strong { color: #111827; font-weight: 500; }
.desc { font-size: 24px; line-height: 32px; }
.pill { display: block; width: 32px; height: 44px; border-radius: 16px; background: #f3f4f6; }
.sla { display: flex; align-items: center; gap: 8px; color: #49a253; }
.sla i { width: 16px; height: 16px; border-radius: 50%; background: #5cc265; }
.more { display: inline-flex; align-items: center; justify-content: center; width: 64px; height: 64px; border-radius: 12px; vertical-align: middle; box-shadow: 0 0 0 4px #fff, 0 0 0 8px #0a0a0a; }
.pager { display: flex; align-items: center; margin-top: 32px; }
.pager p { flex: 0 0 290px; padding-right: 32px; color: #6b7280; }
.pager b, .event b { font-weight: 500; }
.pager nav { display: flex; justify-content: center; flex: 1; gap: 8px; font-weight: 500; }
.step { display: flex; align-items: center; gap: 10px; height: 80px; padding: 0 32px 0 22px; }
.step.next { padding: 0 22px 0 32px; }
.num { width: 80px; height: 80px; border: 2px solid #e5e5e5; border-radius: 12px; }

.lower { display: grid; grid-template-columns: repeat(3, 1fr); gap: 48px; }
.recent { grid-column: span 2; height: 400px; }
.recent h3 { height: 114px; padding: 0 32px; border-bottom: 2px solid #e5e7eb; color: #111827; font-size: 31px; font-weight: 500; line-height: 114px; }
.event { display: flex; gap: 24px; padding: 32px; color: #6b7280; }
.event b { color: #0a0a0a; }
.event small { display: block; font-size: 24px; line-height: 32px; }
.bubble { display: flex; align-items: center; justify-content: center; width: 64px; height: 64px; border-radius: 50%; background: #dbe6fb; color: #f4f4f4; }
.side { padding: 168px 8px 0 0; color: #6b7280; font-size: 30px; line-height: 48px; text-align: center; }

.shade { position: absolute; left: 512px; right: 0; bottom: 0; height: 84px; background: linear-gradient(transparent, rgba(0, 0, 0, .075)); -webkit-mask-image: linear-gradient(90deg, #000 80%, transparent); mask-image: linear-gradient(90deg, #000 80%, transparent); pointer-events: none; }
.toast { position: absolute; right: 32px; bottom: 32px; display: flex; flex-direction: column; gap: 8px; width: 776px; padding: 50px; border-radius: 12px; background: #dd524c; color: #fbe9e8; box-shadow: 0 20px 30px -6px rgba(0, 0, 0, .12), 0 8px 12px -8px rgba(0, 0, 0, .12); }
.toast strong { color: #fff; font-size: 28px; font-weight: 600; }

.dock { display: flex; flex: none; align-self: center; height: 156px; margin-bottom: 10px; padding: 20px 2px 0 3px; border: 2px solid #39393b; border-radius: 48px; background: #171719; }
.slot { position: relative; display: flex; justify-content: center; width: 134px; }
.slot svg { width: 102px; height: 102px; overflow: visible; }
.slot.run::after { content: ""; position: absolute; top: 122px; width: 8px; height: 8px; border-radius: 50%; background: #9a9a9b; }
.petal { mix-blend-mode: multiply; opacity: .88; }
.badge { position: absolute; top: -14px; right: 0; min-width: 50px; height: 50px; padding: 0 8px; border-radius: 25px; background: #dc4b3c; color: #fff; font-size: 24px; font-weight: 500; line-height: 50px; text-align: center; }
.sep { width: 2px; height: 116px; margin: -2px 30px 0; background: #4c4c4e; }
</style>
